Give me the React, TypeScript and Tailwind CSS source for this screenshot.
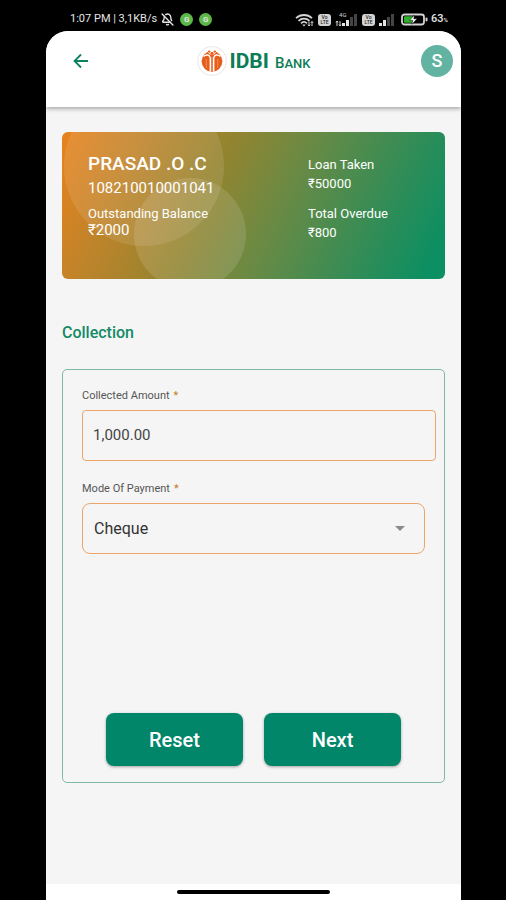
import { useState } from "react";
import { BellOff } from "lucide-react";

const account = {
    name: "PRASAD .O .C",
    number: "108210010001041",
    balance: "₹2000",
    loan: "₹50000",
    overdue: "₹800",
};

const paymentModes = ["Cheque", "Cash", "Online"];

function WifiIcon() {
    return (
        <svg viewBox="0 0 19 14" className="w-[19px] h-[14px]" fill="none" stroke="#d4d4d4" strokeWidth="1.8">
            <path d="M1 5.2C5.6.9 12.4.9 17 5.2" />
            <path d="M3.5 7.8c3.2-3 7.8-3 11 0" />
            <path d="M6 10.3c1.8-1.7 4.2-1.7 6 0" />
            <path d="M9 13.5l-1.7-2h3.4z" fill="#d4d4d4" stroke="none" />
            <path d="M14 8.5v4.5m-1.2-1.4L14 13l1.2-1.4M17 13V8.5m-1.2 1.4L17 8.5l1.2 1.4" strokeWidth="1" />
        </svg>
    );
}

function VolteBadge() {
    return (
        <span className="w-[13px] h-3 rounded-[3px] bg-neutral-300 text-neutral-800 text-[5px] leading-[5px] font-medium flex flex-col items-center justify-center">
            <span>Vo</span>
            <span>LTE</span>
        </span>
    );
}

function Signal({ tag, data }: { tag?: string; data?: boolean }) {
    return (
        <span className="relative flex">
            {tag && <span className="absolute left-1 -top-px text-[6px] leading-[6px] text-neutral-300">{tag}</span>}
            <svg viewBox="0 0 23 13" className={data ? "w-[23px] h-[13px]" : "w-4 h-[13px]"} preserveAspectRatio="xMaxYMid slice">
                {data && <path d="M2 8v5M1 9.5L2 8l1 1.5M5 8v5m-1-1.5L5 13l1-1.5" stroke="#d4d4d4" fill="none" />}
                <rect x="7" y="10" width="3" height="3" fill="#e5e5e5" />
                <rect x="11" y="7" width="3" height="6" fill="#e5e5e5" />
                <rect x="15" y="4" width="3" height="9" fill="#444" />
                <rect x="19" y="1" width="3" height="12" fill="#444" />
            </svg>
        </span>
    );
}

function BatteryIcon() {
    return (
        <svg viewBox="0 0 27 13" className="w-[27px] h-[13px]">
            <rect x="1" y="1.5" width="22" height="10" rx="2.5" fill="#000" stroke="#d4d4d4" strokeWidth="1.8" />
            <rect x="3" y="3.3" width="9" height="6.4" rx="1" fill="#2fae2b" />
            <rect x="24.5" y="4.5" width="2" height="4" rx="1" fill="#d4d4d4" />
            <path d="M13.5 2L8.5 7.3h3.3l-1 4 5.4-5.5h-3.4z" fill="#fff" stroke="#000" strokeWidth="0.5" />
        </svg>
    );
}

function BankMark() {
    return (
        <svg viewBox="0 0 30 30" className="w-[30px] h-[30px]">
            <circle cx="15" cy="15" r="14.3" fill="#fff" stroke="#ececec" strokeWidth="1.2" />
            <circle cx="15" cy="15.3" r="10.4" fill="#e85d1c" />
            {/* heads */}
            <path d="M10 3h10l-1 3.5-2 2h-4l-2-2z" fill="#fff" />
            <circle cx="12.2" cy="5.6" r="1.2" fill="#e85d1c" />
            <circle cx="17.8" cy="5.6" r="1.2" fill="#e85d1c" />
            <circle cx="15" cy="7.3" r="1.5" fill="#e85d1c" />
            {/* shoulders and stem */}
            <path d="M6.5 10.5C9.5 8 12.6 8.6 13.3 12v13.500M23.5 10.5C20.5 8 17.4 8.6 16.7 12v13.5" fill="none" stroke="#fff" strokeWidth="1.4" />
            <path d="M15 11v15" stroke="#f08a55" strokeWidth="1.6" />
            <path d="M9.3 13v9M20.7 13v9" stroke="#f2a077" strokeWidth="0.7" />
        </svg>
    );
}

function StatusBar() {
    return (
        <div className="h-[31px] pl-6 pr-3 pt-2 flex items-center justify-between text-neutral-200">
            <div className="flex items-center">
                <span className="text-[11px] whitespace-nowrap">1:07 PM | 3,1KB/s</span>
                <BellOff className="w-[13px] h-[13px] ml-1" strokeWidth={2.5} />
                <span className="w-[13px] h-[13px] ml-[6px] rounded-full bg-[#5cb848] text-[8px] leading-[13px] text-center font-bold">G</span>
                <span className="w-[13px] h-[13px] ml-[6px] rounded-full bg-[#5cb848] text-[8px] leading-[13px] text-center font-bold">G</span>
            </div>
            <div className="flex items-center">
                <WifiIcon />
                <span className="ml-1 flex items-center gap-1">
                    <VolteBadge />
                    <Signal tag="4G" data />
                    <VolteBadge />
                    <Signal />
                </span>
                <span className="ml-[6px] mr-[3px] flex">
                    <BatteryIcon />
                </span>
                <span className="text-[11px] font-medium">
                    63<span className="text-[6px]">%</span>
                </span>
            </div>
        </div>
    );
}

function Header() {
    return (
        <header className="relative z-10 h-[76px] px-2 pt-[14px] grid grid-cols-[1fr_auto_1fr] items-start bg-white shadow-[0_2px_4px_rgba(0,0,0,0.3)]">
            <button type="button" aria-label="Back" className="w-8 h-8 ml-[11px] flex items-center justify-center text-[#0b8260]">
                <svg viewBox="0 0 16 16" className="w-4 h-4" fill="none" stroke="currentColor" strokeWidth="1.8">
                    <path d="M15 8H2M8 1.5L1.5 8 8 14.5" />
                </svg>
            </button>
            <div className="h-8 flex items-center gap-[3px] text-[#0d7d55]">
                <BankMark />
                <div className="flex items-baseline gap-[6px] pt-[3px] leading-8">
                    <span className="text-[21px] font-bold">IDBI</span>
                    <span className="text-[13px] font-medium">
                        <span className="text-[15px]">B</span>ANK
                    </span>
                </div>
            </div>
            <button type="button" aria-label="Profile" className="justify-self-end w-8 h-8 rounded-full bg-[#62b3a2] text-white text-lg leading-8 font-medium">
                S
            </button>
        </header>
    );
}

function AccountCard() {
    return (
        <section className="relative overflow-hidden h-[147px] rounded-md pl-[26px] pr-4 pt-5 flex text-white bg-[linear-gradient(115deg,#e8821c_0%,#c0842a_18%,#94842f_38%,#6a8a44_56%,#3a8c54_76%,#0c8f62_95%)]">
            <div className="absolute left-[2px] -top-[46px] w-40 h-40 rounded-full bg-white/10" />
            <div className="absolute left-[72px] top-[46px] w-28 h-28 rounded-full bg-white/12" />
            <div className="relative w-[220px]">
                <h2 className="text-[19px] leading-6 font-medium">{account.name}</h2>
                <p className="text-[15px] leading-6">{account.number}</p>
                <p className="mt-[6px] text-[13px] leading-4">Outstanding Balance</p>
                <p className="text-[15px] leading-4">{account.balance}</p>
            </div>
            <div className="relative pt-1 text-[13px]">
                <p className="leading-[18px]">Loan Taken</p>
                <p className="leading-5">{account.loan}</p>
                <p className="mt-[10px] leading-5">Total Overdue</p>
                <p className="leading-[18px]">{account.overdue}</p>
            </div>
        </section>
    );
}

function CollectionForm() {
    const [amount, setAmount] = useState("1,000.00");
    const [mode, setMode] = useState("Cheque");

    return (
        <form
            onSubmit={(e) => e.preventDefault()}
            className="mt-[26px] min-h-[414px] flex flex-col rounded-[5px] border border-[#80b9a7] pl-[19px] pr-2 pt-[18px] pb-4"
        >
            <label htmlFor="amount" className="flex gap-1 text-[11px] leading-4 text-[#555]">
                Collected Amount <span className="text-[#c97a1e]">*</span>
            </label>
            <input
                id="amount"
                value={amount}
                onChange={(e) => setAmount(e.target.value)}
                className="mt-[6px] w-full h-[51px] rounded border border-[#eba66c] bg-transparent px-[10px] pb-[2px] text-[15px] text-[#444] outline-none"
            />

            <label htmlFor="mode" className="mt-5 flex gap-1 text-[11px] leading-4 text-[#555]">
                Mode Of Payment <span className="text-[#c97a1e]">*</span>
            </label>
            <div className="relative mt-[6px] mr-[11px]">
                <select
                    id="mode"
                    value={mode}
                    onChange={(e) => setMode(e.target.value)}
                    className="block w-full h-[51px] appearance-none rounded-lg border border-[#eba66c] bg-transparent px-[11px] text-base text-[#333] outline-none"
                >
                    {paymentModes.map((item) => (
                        <option key={item}>{item}</option>
                    ))}
                </select>
                <svg viewBox="0 0 10 5" className="absolute right-5 top-[23px] w-[10px] h-[5px] pointer-events-none">
                    <path d="M0 0h10L5 5z" fill="#8a8a8a" />
                </svg>
            </div>

            {/* actions */}
            <div className="mt-auto ml-6 mr-[35px] grid grid-cols-2 gap-[21px]">
                <button type="reset" className="h-[53px] rounded-lg bg-[#02866a] text-white text-xl leading-6 font-medium shadow-[0_1px_3px_rgba(0,0,0,0.35)]">
                    Reset
                </button>
                <button type="submit" className="h-[53px] rounded-lg bg-[#02866a] text-white text-xl leading-6 font-medium shadow-[0_1px_3px_rgba(0,0,0,0.35)]">
                    Next
                </button>
            </div>
        </form>
    );
}

export default function App() {
    return (
        <div className="min-h-screen flex flex-col bg-black px-[46px] font-['Roboto','Noto_Sans',sans-serif]">
            <StatusBar />
            <div className="flex-1 -mr-px flex flex-col rounded-t-[22px] overflow-hidden bg-white">
                <Header />
                <main className="flex-1 bg-[#f5f5f5] px-4 pt-[25px]">
                    <AccountCard />
                    <h1 className="mt-11 text-base leading-5 font-medium text-[#138a66]">Collection</h1>
                    <CollectionForm />
                </main>
                <footer className="h-4 flex items-center justify-center">
                    <div className="w-[153px] h-1 rounded-full bg-black" />
                </footer>
            </div>
        </div>
    );
}
